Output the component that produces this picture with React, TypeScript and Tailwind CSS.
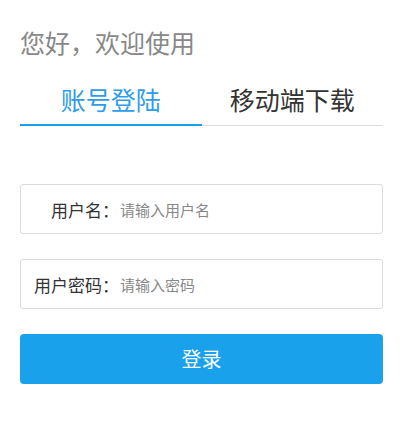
import React, { useState } from 'react';

const font = { fontFamily: '"Noto Sans CJK SC", "Noto Sans", sans-serif' };

const Field: React.FC<{ label: string, placeholder: string, type?: string }> = ({ label, placeholder, type = 'text' }) => (
    <div className="flex items-center h-[50px] border border-[#dcdcdc] rounded-[3px] bg-white">
        <span className="w-[98px] shrink-0 text-right text-[17px] text-[#333] leading-none">{label}</span>
        <input
            type={type}
            placeholder={placeholder}
            className="ml-[1px] flex-1 h-full outline-none bg-transparent text-[15px] text-[#333] placeholder:text-[#888]"
            style={font}
        />
    </div>
);

const App: React.FC = () => {
    const [tab, setTab] = useState(0);

    return (
        <div className="min-h-screen bg-white pl-5 pt-6" style={font}>
            <div className="w-[363px]">
                <h1 className="text-[25px] leading-[36px] text-[#888] font-normal">您好，欢迎使用</h1>
                <div className="mt-[21px] flex border-b border-[#dddddd]">
                    {['账号登陆', '移动端下载'].map((t, i) => (
                        <button
                            key={t}
                            onClick={() => setTab(i)}
                            className={`flex-1 text-[25px] leading-[36px] pb-[7px] -mb-px border-b-2 ${tab === i ? 'text-[#2f9ce8] border-[#1aa1eb]' : 'text-[#333] border-transparent'}`}
                        >
                            {t}
                        </button>
                    ))}
                </div>
                <div className="mt-[58px] flex flex-col gap-[25px]">
                    <Field label="用户名：" placeholder="请输入用户名" />
                    <Field label="用户密码：" placeholder="请输入密码" type="password" />
                    <button className="h-[50px] rounded-[4px] bg-[#1aa1eb] text-white text-[20px]">登录</button>
                </div>
            </div>
        </div>
    );
};

export default App;
